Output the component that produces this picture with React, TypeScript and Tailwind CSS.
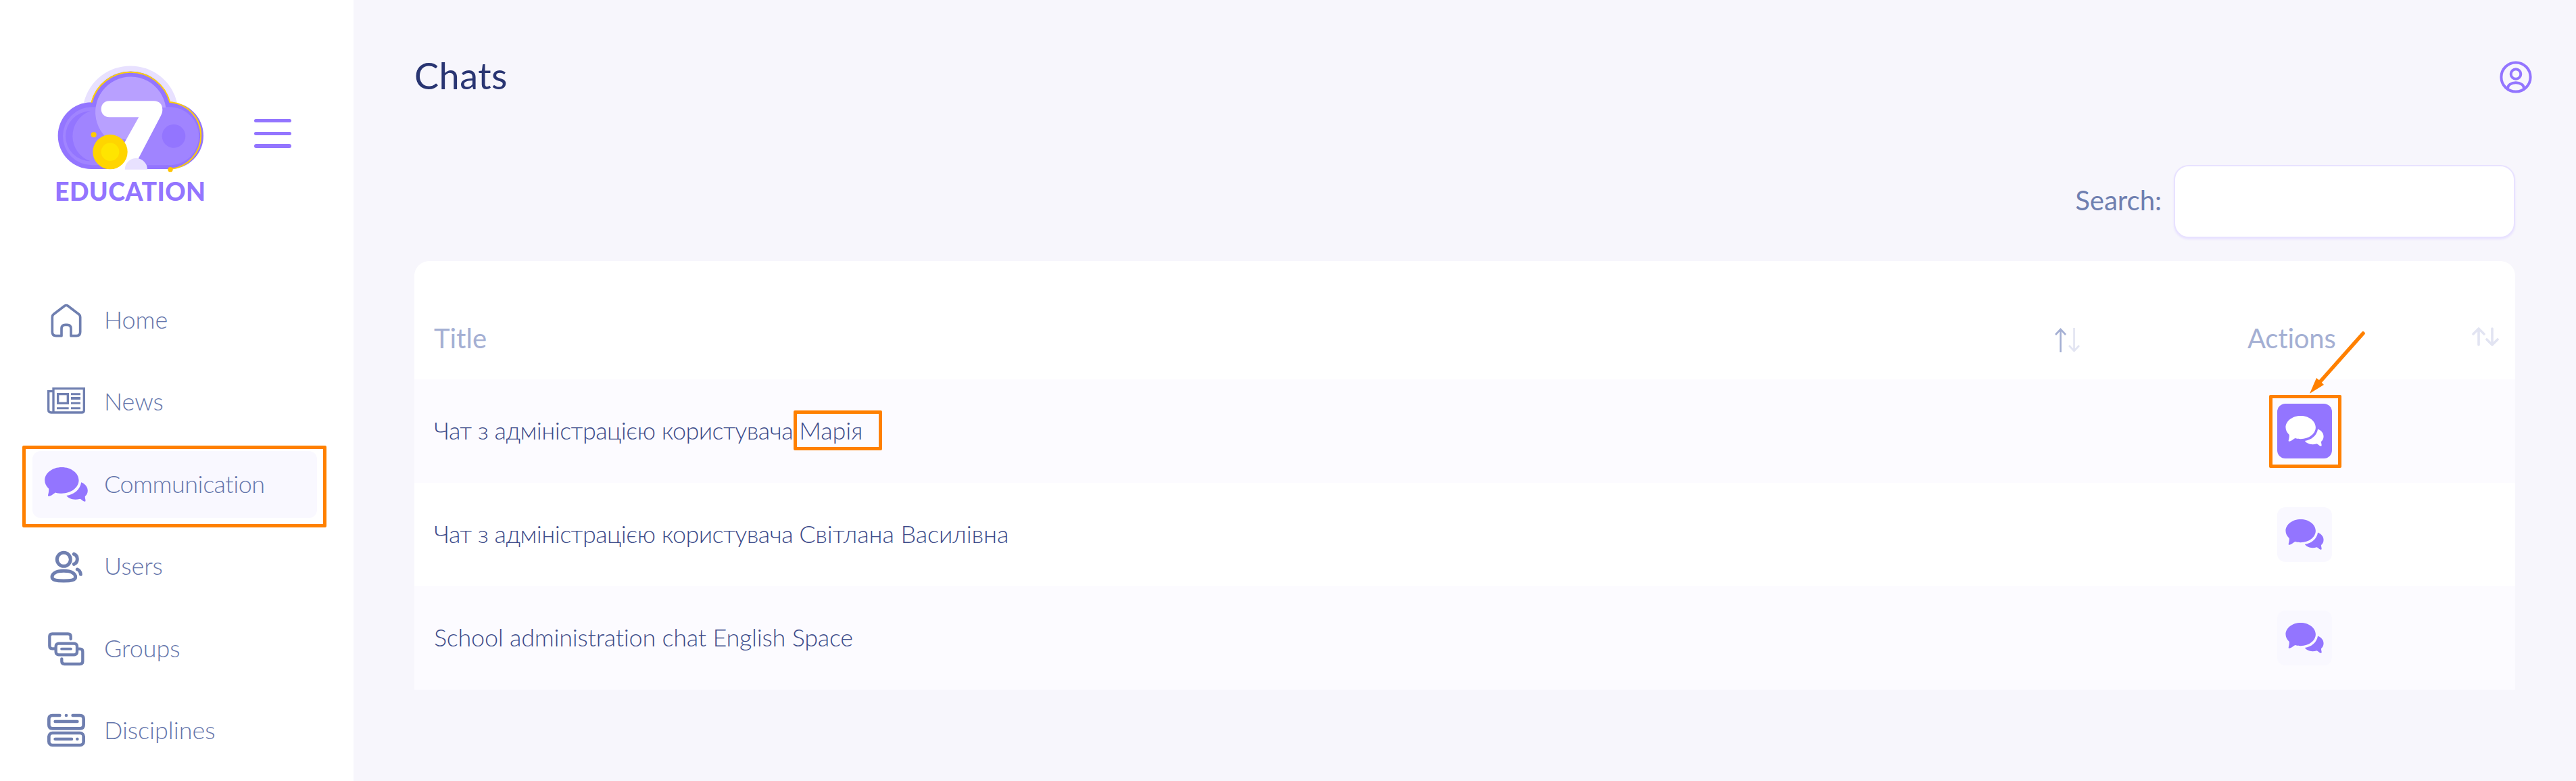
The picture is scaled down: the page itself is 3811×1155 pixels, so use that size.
import type { ReactNode } from "react";

/* ---------- icons ---------- */

function HomeIcon() {
  return (
    <svg width="60" height="60" viewBox="0 0 180 180" fill="none" stroke="#6f7fb0" strokeWidth="11" strokeLinejoin="round">
      <path d="M28 75 Q28 67 34 62 L83 25 Q90 20 97 25 L146 62 Q152 67 152 75 V141 Q152 158 135 158 H111 V126 Q111 109 94 109 H86 Q69 109 69 126 V158 H45 Q28 158 28 141 Z" />
    </svg>
  );
}

function NewsIcon() {
  return (
    <svg width="60" height="60" viewBox="0 0 180 180" fill="none" stroke="#6f7fb0" strokeWidth="10">
      <path d="M33 29 H169 V125 Q169 135 159 135 H22 Q11 135 11 124 V41 H33 M33 24 V132" />
      <rect x="53" y="53" width="44" height="41" />
      <path d="M111 53 H153 M111 94 H153 M48 116 H101 M111 116 H153" strokeWidth="9" />
      <path d="M111 72 H153" strokeWidth="12" />
    </svg>
  );
}

function ChatIcon({ className }: { className: string }) {
  return (
    <svg className={className} viewBox="0 0 192 154" fill="currentColor">
      <path d="M76 0C118 0 152 26 152 58.5S118 117 76 117C66 117 57 116 48 113C38 118 30 128 19 129C14 129 14 126 15 122C18 112 19 103 18 96C7 86 0 73 0 58.5C0 26 34 0 76 0Z" />
      <path d="M163 67C182 75 192 89 192 104C192 114 188 123 180 130C179 138 183 145 182 150C182 154 178 154 174 152C168 149 164 144 158 141C130 149 107 141 97 127C130 122 158 100 163 67Z" />
    </svg>
  );
}

function UsersIcon() {
  return (
    <svg width="60" height="60" viewBox="0 0 180 180" fill="none" stroke="#6f7fb0" strokeWidth="15" strokeLinecap="round">
      <circle cx="79" cy="58" r="30" />
      <path d="M79 109 C116 109 131 122 131 136 C131 150 112 153 79 153 C46 153 27 150 27 136 C27 122 42 109 79 109 Z" />
      <path d="M124 34 Q139 40 139 56 Q139 73 124 79 M139 102 Q153 108 154 124" />
    </svg>
  );
}

function GroupsIcon() {
  return (
    <svg width="60" height="60" viewBox="0 0 180 180" fill="none" stroke="#6f7fb0" strokeWidth="13" strokeLinecap="round">
      <rect x="44" y="65" width="94" height="50" rx="12" />
      <path d="M110 45 V34 Q110 22 98 22 H28 Q16 22 16 34 V76 Q16 88 28 88 H40 M70 133 V144 Q70 156 82 156 H151 Q163 156 163 144 V101 Q163 89 151 89 H140" />
      <path d="M69 89 H111" strokeWidth="11" />
    </svg>
  );
}

function DisciplinesIcon() {
  return (
    <svg width="60" height="60" viewBox="0 0 180 180" fill="none" stroke="#6f7fb0" strokeWidth="14" strokeLinecap="round">
      <path d="M61 21 H29 Q13 21 13 37 V63 Q13 79 29 79 H151 Q167 79 167 63 V37 Q167 21 151 21 H119 M90 21 V21.1" />
      <rect x="13" y="99" width="154" height="54" rx="16" />
      <path d="M41 48 H139 M41 126 H114 M139 126 V126.1" />
    </svg>
  );
}

function Logo() {
  return (
    <svg width="219" height="158" viewBox="72 50 657 474">
      <path d="M192 214 A213 213 0 0 1 606 214 Z" fill="#e8e1ff" />
      <path d="M225 213 A180 180 0 0 1 575 213 A148 148 0 0 1 575 509 H225 A148 148 0 0 1 225 213 Z" fill="#9375ff" />
      <rect x="99" y="234" width="604" height="258" rx="129" fill="#a084ff" />
      <path d="M222 252 A111 111 0 0 0 222 474 A117 117 0 0 1 222 252 Z" fill="#9375ff" />
      <path d="M556 236 A157 157 0 1 0 290 368 L400 380 L480 236 Z" fill="#b8a0ff" />
      <path d="M226 214 A180 180 0 0 1 574 212 A149 149 0 0 1 576 509" fill="none" stroke="#ffd000" strokeWidth="6" />
      <circle cx="591" cy="363" r="52" fill="#9375ff" />
      <path d="M305 207 H503 C527 207 541 222 541 246 C541 257 538 265 533 274 L435 461 L425 511 H325 L340 450 L436 279 H305 C257 279 257 207 305 207 Z" fill="#fff" />
      <circle cx="309" cy="433" r="77" fill="#ffd500" />
      <circle cx="309" cy="433" r="40" fill="#ffe500" />
      <circle cx="236" cy="357" r="12" fill="#ffcb00" />
      <path d="M374 511 A50 50 0 0 1 474 511 Z" fill="#e8e1ff" />
      <circle cx="576" cy="511" r="11" fill="#ffc400" />
    </svg>
  );
}

function UserCircle() {
  return (
    <svg width="48" height="48" viewBox="0 0 48 48" fill="none" stroke="#9375ff" strokeWidth="4">
      <circle cx="24" cy="24" r="21.6" />
      <circle cx="24" cy="19.5" r="7.3" />
      <path d="M12 42 C11 29 37 29 36 42" />
    </svg>
  );
}

/* ---------- sidebar ---------- */

type NavItem = { label: string; icon: ReactNode; active?: boolean };

const navItems: NavItem[] = [
  { label: "Home", icon: <HomeIcon /> },
  { label: "News", icon: <NewsIcon /> },
  { label: "Communication", icon: <ChatIcon className="w-16 h-[51px] text-[#9375ff]" />, active: true },
  { label: "Users", icon: <UsersIcon /> },
  { label: "Groups", icon: <GroupsIcon /> },
  { label: "Disciplines", icon: <DisciplinesIcon /> },
];

function Sidebar() {
  return (
    <aside className="w-[523px] shrink-0 bg-white">
      <div className="flex pt-[97px] pl-[84px] h-[424px]">
        <div className="w-[219px]">
          <Logo />
          <div className="-ml-[3px] mt-1.5 text-[37.5px] leading-[44px] font-black tracking-[0.4px] text-[#9375ff] whitespace-nowrap">
            EDUCATION
          </div>
        </div>
        <div className="flex flex-col gap-[13.4px] ml-[73px] pt-[79px]">
          <span className="w-[55px] h-[5.3px] rounded-full bg-[#9375ff]" />
          <span className="w-[55px] h-[5.3px] rounded-full bg-[#9375ff]" />
          <span className="w-[55px] h-[5.3px] rounded-full bg-[#9375ff]" />
        </div>
      </div>
      <nav className="flex flex-col gap-[22.6px] pl-12">
        {navItems.map((item) => (
          <div
            key={item.label}
            className={`relative flex items-center w-[421px] h-[99px] rounded-xl pl-[18px] ${item.active ? "bg-[#f9f8ff]" : ""}`}
          >
            <div className="flex justify-center w-16">{item.icon}</div>
            <span
              className={`ml-6 pb-1 text-[36px] font-light text-[#6475ab] ${item.active ? "tracking-[-0.5px]" : "tracking-[-0.05px]"}`}
            >
              {item.label}
            </span>
            {item.active && (
              <div className="absolute -left-[15px] -top-2 w-[450px] h-[121px] border-5 border-[#ff8000] rounded-xs" />
            )}
          </div>
        ))}
      </nav>
    </aside>
  );
}

/* ---------- chats table ---------- */

const chats = [
  { text: "Чат з адміністрацією користувача", name: "Марія", tracking: "tracking-[-0.55px]", marked: true },
  { text: "Чат з адміністрацією користувача", name: "Світлана Василівна", tracking: "tracking-[-0.55px]", marked: false },
  { text: "School administration chat English Space", name: "", tracking: "tracking-[-0.25px]", marked: false },
];

function ChatsTable() {
  return (
    <div className="w-[3108px] mt-[34px] rounded-t-[22px] bg-white">
      <div className="flex items-center h-[175px] pt-[57px] text-[40px] text-[#a4afd3]">
        <div className="flex items-center w-[2464px] pl-[29px] h-full">
          <span className="flex-1 pb-1">Title</span>
          <svg className="mt-0.5" width="38" height="38" viewBox="0 0 38 38" fill="none" strokeWidth="2.6">
            <path d="M9.5 37 V3 M2 11 L9.5 3 L17 11" stroke="#a4afd3" />
            <path d="M29.5 1 V35 M22 27 L29.5 35 L37 27" stroke="#e2e4f2" />
          </svg>
        </div>
        <div className="flex items-center flex-1 h-full pl-[248px] pr-6">
          <span className="flex-1 pb-1 tracking-[-0.2px]">Actions</span>
          <svg className="mb-2" width="40" height="28" viewBox="0 0 40 28" fill="none" stroke="#e2e4f2" strokeWidth="3.6" strokeLinecap="round" strokeLinejoin="round">
            <path d="M10 26 V2 M2 10 L10 2 L18 10" />
            <path d="M30 2 V26 M22 18 L30 26 L38 18" />
          </svg>
        </div>
      </div>
      {chats.map((chat, i) => (
        <div key={i} className={`flex items-center h-[153px] ${i % 2 === 0 ? "bg-[#fcfbff]" : "bg-white"}`}>
          <div className="w-[2756px] pl-[29px] pb-1 text-[36px] font-light text-[#3d4c8a] whitespace-nowrap">
            <span className={chat.tracking}>{chat.text} </span>
            <span className="relative tracking-[-0.1px]">
              {chat.name}
              {chat.marked && (
                <span className="absolute -left-2 -top-[7px] w-[131px] h-[59px] border-5 border-[#ff8000] rounded-xs" />
              )}
            </span>
          </div>
          <div
            className={`relative flex justify-center items-center size-[81px] rounded-xl ${
              chat.marked ? "bg-[#9375ff] text-white" : "bg-[#f9f8ff] text-[#9375ff]"
            }`}
          >
            <ChatIcon className="w-[57px] h-[45px]" />
            {chat.marked && (
              <>
                <div className="absolute -left-3 -top-[13px] w-[107px] h-[108px] border-5 border-[#ff8000] rounded-xs" />
                <svg className="absolute left-[44px] -top-[108px]" width="90" height="96" viewBox="0 0 90 96">
                  <path d="M83 4 L19 76" stroke="#ff8000" strokeWidth="5.5" strokeLinecap="round" />
                  <path d="M4 93 L14 70 L19 74 L25 80 Z" fill="#ff8000" />
                </svg>
              </>
            )}
          </div>
        </div>
      ))}
    </div>
  );
}

export default function App() {
  return (
    <div className="flex w-[3811px] h-[1155px] overflow-hidden bg-[#f7f6fc] font-['Lato','Open_Sans',sans-serif]">
      <Sidebar />
      <main className="flex-1 pl-[90px]">
        {/* top bar */}
        <div className="flex items-center justify-between h-[227px] pr-[65px]">
          <h1 className="pb-1 text-[54px] tracking-[0.5px] text-[#293572]">Chats</h1>
          <UserCircle />
        </div>
        {/* search */}
        <div className="flex items-center justify-end gap-[18px] h-[108px] mt-[17px] pr-[90px]">
          <label className="pb-1 text-[40px] text-[#6f7fb0]">Search:</label>
          <input className="w-[505px] h-[108px] rounded-[22px] border-2 border-[#e8e2ff] bg-white shadow-[0_2px_3px_#e8e2ff]" />
        </div>
        <ChatsTable />
      </main>
    </div>
  );
}
